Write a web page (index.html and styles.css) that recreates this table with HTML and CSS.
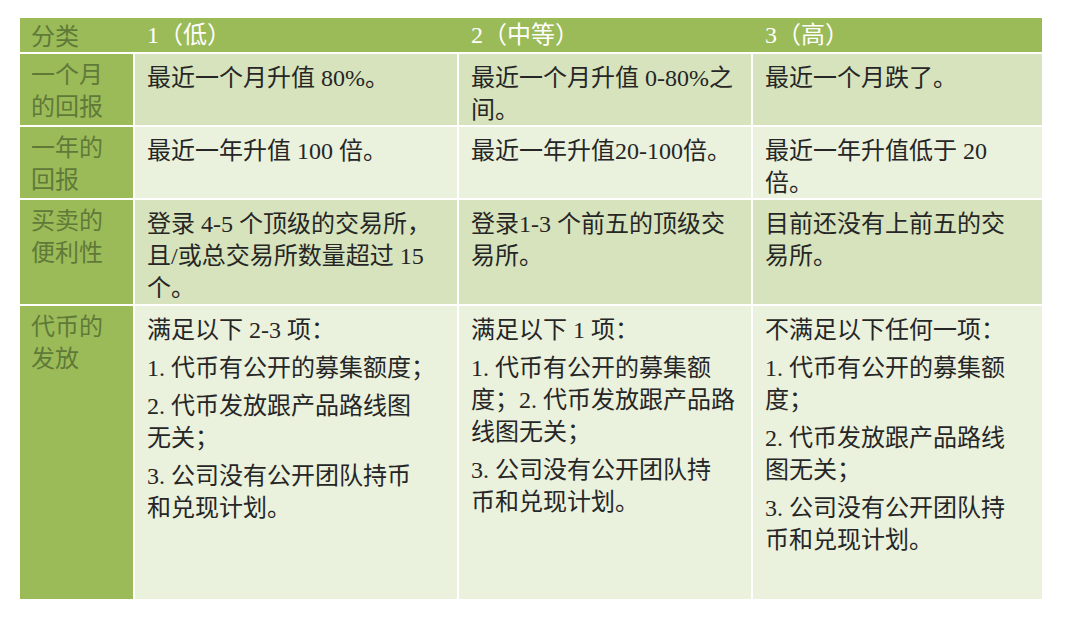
FILE: index.html
```html
<!DOCTYPE html>
<html lang="zh-CN">
<head>
<meta charset="utf-8">
<title>分类</title>
<link rel="stylesheet" href="styles.css">
</head>
<body>
<div class="tbl">
  <div class="cell head first">分类</div>
  <div class="cell head">1（低）</div>
  <div class="cell head">2（中等）</div>
  <div class="cell head">3（高）</div>

  <div class="cell first">一个月<br>的回报</div>
  <div class="cell body odd">最近一个月升值 80%。</div>
  <div class="cell body odd">最近一个月升值 0-80%之<br>间。</div>
  <div class="cell body odd">最近一个月跌了。</div>

  <div class="cell first">一年的<br>回报</div>
  <div class="cell body even">最近一年升值 100 倍。</div>
  <div class="cell body even">最近一年升值20-100倍。</div>
  <div class="cell body even">最近一年升值低于 20<br>倍。</div>

  <div class="cell first">买卖的<br>便利性</div>
  <div class="cell body odd">登录 4-5 个顶级的交易所，<br>且/或总交易所数量超过 15<br>个。</div>
  <div class="cell body odd">登录1-3 个前五的顶级交<br>易所。</div>
  <div class="cell body odd">目前还没有上前五的交<br>易所。</div>

  <div class="cell first">代币的<br>发放</div>
  <div class="cell body even">
    <p class="para">满足以下 2-3 项：</p>
    <p class="para">1. 代币有公开的募集额度；</p>
    <p class="para">2. 代币发放跟产品路线图<br>无关；</p>
    <p class="para">3. 公司没有公开团队持币<br>和兑现计划。</p>
  </div>
  <div class="cell body even">
    <p class="para">满足以下 1 项：</p>
    <p class="para">1. 代币有公开的募集额<br>度；2. 代币发放跟产品路<br>线图无关；</p>
    <p class="para">3. 公司没有公开团队持<br>币和兑现计划。</p>
  </div>
  <div class="cell body even">
    <p class="para">不满足以下任何一项：</p>
    <p class="para">1. 代币有公开的募集额<br>度；</p>
    <p class="para">2. 代币发放跟产品路线<br>图无关；</p>
    <p class="para">3. 公司没有公开团队持<br>币和兑现计划。</p>
  </div>
</div>
</body>
</html>
```

FILE: styles.css
```css
html, body {
  margin: 0;
  padding: 0;
  background: #ffffff;
}

body {
  padding: 18px 0 0 20px;
  font-family: "Liberation Serif", "Noto Sans CJK SC", serif;
}

.tbl {
  display: grid;
  grid-template-columns: 113px 324px 294px 291px;
  grid-template-rows: 34px 73px 73px 106px 295px;
  width: 1022px;
}

.cell {
  box-sizing: border-box;
  white-space: nowrap;
  font-size: 24px;
  line-height: 32px;
  color: #262626;
  border-top: 2px solid #ffffff;
  border-left: 2px solid #ffffff;
  padding: 8px 8px 0 12px;
}

.head {
  background: #9bbb59;
  color: #ffffff;
  border-top: 0;
  border-left-color: transparent;
  line-height: 34px;
  padding: 0 0 0 12px;
}

.first {
  background: #9bbb59;
  border-left: 0;
  color: #5f7a38;
  font-family: "Noto Sans CJK SC", sans-serif;
  padding: 3px 0 0 11px;
}

.head.first {
  border-top: 0;
  padding-top: 0;
}

.odd {
  background: #d6e3bc;
}

.even {
  background: #eaf1dd;
}

.para {
  margin: 0 0 6px 0;
}
```
